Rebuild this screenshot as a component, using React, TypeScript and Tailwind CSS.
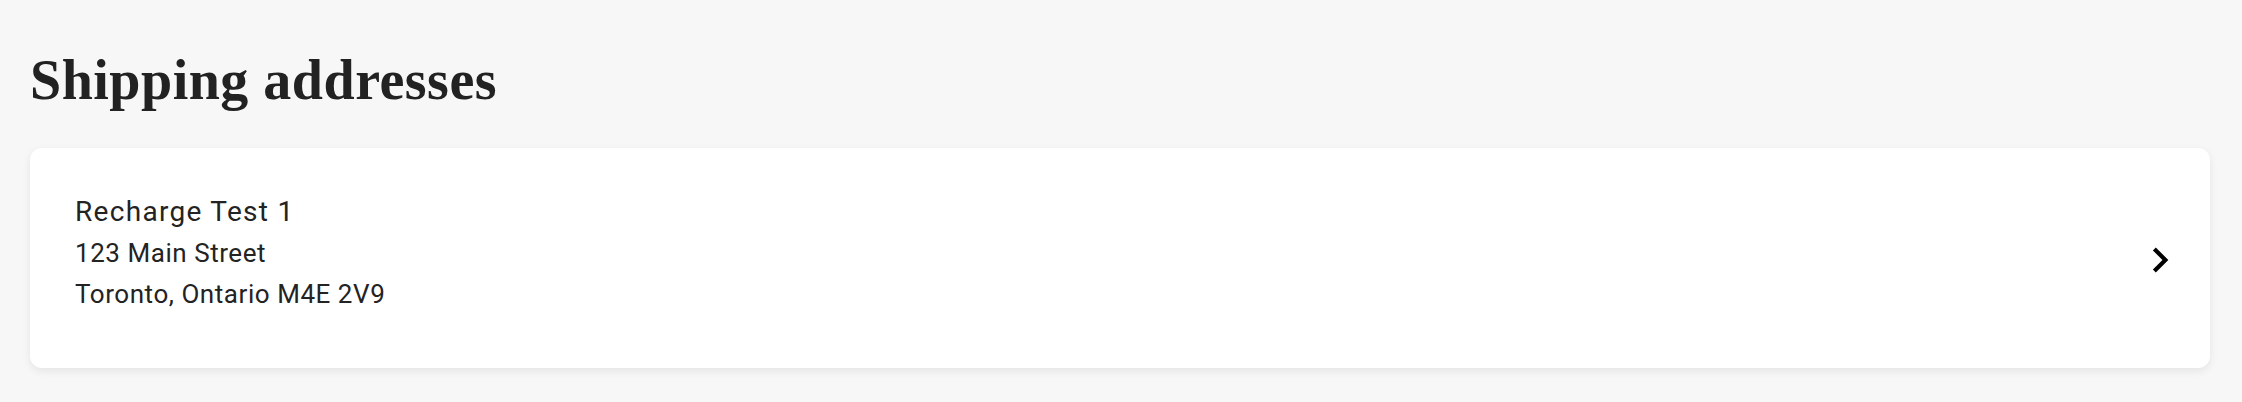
import React from "react";

type Address = {
  name: string;
  street: string;
  city: string;
};

const addresses: Address[] = [
  { name: "Recharge Test 1", street: "123 Main Street", city: "Toronto, Ontario M4E 2V9" },
];

function ChevronRight() {
  return (
    <svg viewBox="0 0 24 24" className="mt-[14px] h-[50px] w-[50px] shrink-0" fill="#000" aria-hidden="true">
      <path d="M10 6L8.59 7.41 13.17 12l-4.58 4.59L10 18l6-6z" />
    </svg>
  );
}

function AddressCard({ address }: { address: Address }) {
  return (
    <button
      type="button"
      className="flex w-full items-center justify-between rounded-xl bg-white pl-[45px] pr-[25px] pt-[43px] pb-[53px] text-left shadow-[0_3px_8px_rgba(0,0,0,0.08)]"
    >
      <div className="flex flex-col text-[#232323] [font-family:Roboto,'Noto_Sans',sans-serif]">
        <span className="text-[28px] leading-[41px] tracking-[1.3px]">{address.name}</span>
        <span className="text-[26px] leading-[42px] tracking-[0.55px]">{address.street}</span>
        <span className="text-[26px] leading-[41px] tracking-[0.55px]">{address.city}</span>
      </div>
      <ChevronRight />
    </button>
  );
}

export default function App() {
  return (
    <div className="min-h-[402px] bg-[#f7f7f7] pl-[30px] pr-[32px] pt-[52px]">
      <h1 className="text-[56px] font-bold leading-[56px] tracking-[0.5px] text-[#222222] [font-family:'Liberation_Serif',serif]">
        Shipping addresses
      </h1>
      <div className="mt-[40px] flex flex-col gap-4">
        {addresses.map((a) => (
          <AddressCard key={a.name} address={a} />
        ))}
      </div>
    </div>
  );
}
